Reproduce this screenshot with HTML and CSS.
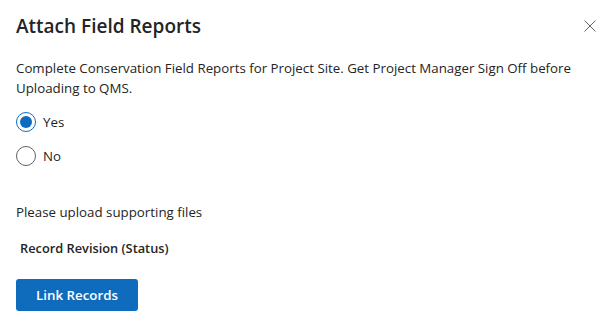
FILE: index.html
```html
<!DOCTYPE html>
<html lang="en">
<head>
<meta charset="utf-8">
<title>Attach Field Reports</title>
<link rel="stylesheet" href="styles.css">
</head>
<body>
<div class="dialog">
  <div class="header">
    <h1 class="title">Attach Field Reports</h1>
    <button class="close" aria-label="Close">
      <svg width="12" height="12" viewBox="0 0 12 12"><path d="M0.5 0.5L11.5 11.5M11.5 0.5L0.5 11.5" stroke="#616161" stroke-width="1" fill="none"/></svg>
    </button>
  </div>
  <p class="desc">Complete Conservation Field Reports for Project Site. Get Project Manager Sign Off before Uploading to QMS.</p>
  <div class="radios">
    <label class="radio"><span class="dot checked"></span><span>Yes</span></label>
    <label class="radio"><span class="dot"></span><span>No</span></label>
  </div>
  <p class="upload">Please upload supporting files</p>
  <p class="record">Record Revision (Status)</p>
  <button class="primary">Link Records</button>
</div>
</body>
</html>
```

FILE: styles.css
```css
* { box-sizing: border-box; }
body {
  margin: 0;
  background: #ffffff;
  font-family: "Open Sans", "Noto Sans", sans-serif;
  color: #242424;
}
.dialog {
  padding: 12px 17px 0 16px;
}
.header {
  display: flex;
  align-items: center;
  justify-content: space-between;
  height: 28px;
}
.title {
  margin: 0;
  font-size: 19px;
  font-weight: 600;
  line-height: 28px;
}
.close {
  border: none;
  background: none;
  padding: 0;
  width: 12px;
  height: 12px;
  display: flex;
}
.desc {
  margin: 18px 0 0;
  font-size: 13.3px;
  line-height: 20px;
}
.radios {
  margin-top: 8px;
  display: flex;
  flex-direction: column;
  gap: 2px;
}
.radio {
  display: flex;
  align-items: center;
  gap: 7px;
  height: 32px;
  font-size: 13.3px;
}
.dot {
  width: 20px;
  height: 20px;
  border-radius: 50%;
  border: 1px solid #616161;
  display: flex;
  align-items: center;
  justify-content: center;
}
.dot.checked {
  border-color: #0f6cbd;
}
.dot.checked::after {
  content: "";
  width: 12px;
  height: 12px;
  border-radius: 50%;
  background: #0f6cbd;
}
.upload {
  margin: 30px 0 0;
  font-size: 13.3px;
  line-height: 20px;
}
.record {
  margin: 16px 0 0 4px;
  font-size: 12.8px;
  font-weight: 600;
  line-height: 20px;
}
.primary {
  margin-top: 21px;
  height: 32px;
  width: 122px;
  border: none;
  border-radius: 3px;
  background: #0f6cbd;
  color: #ffffff;
  font-family: inherit;
  font-size: 13.3px;
  font-weight: 600;
}
```
